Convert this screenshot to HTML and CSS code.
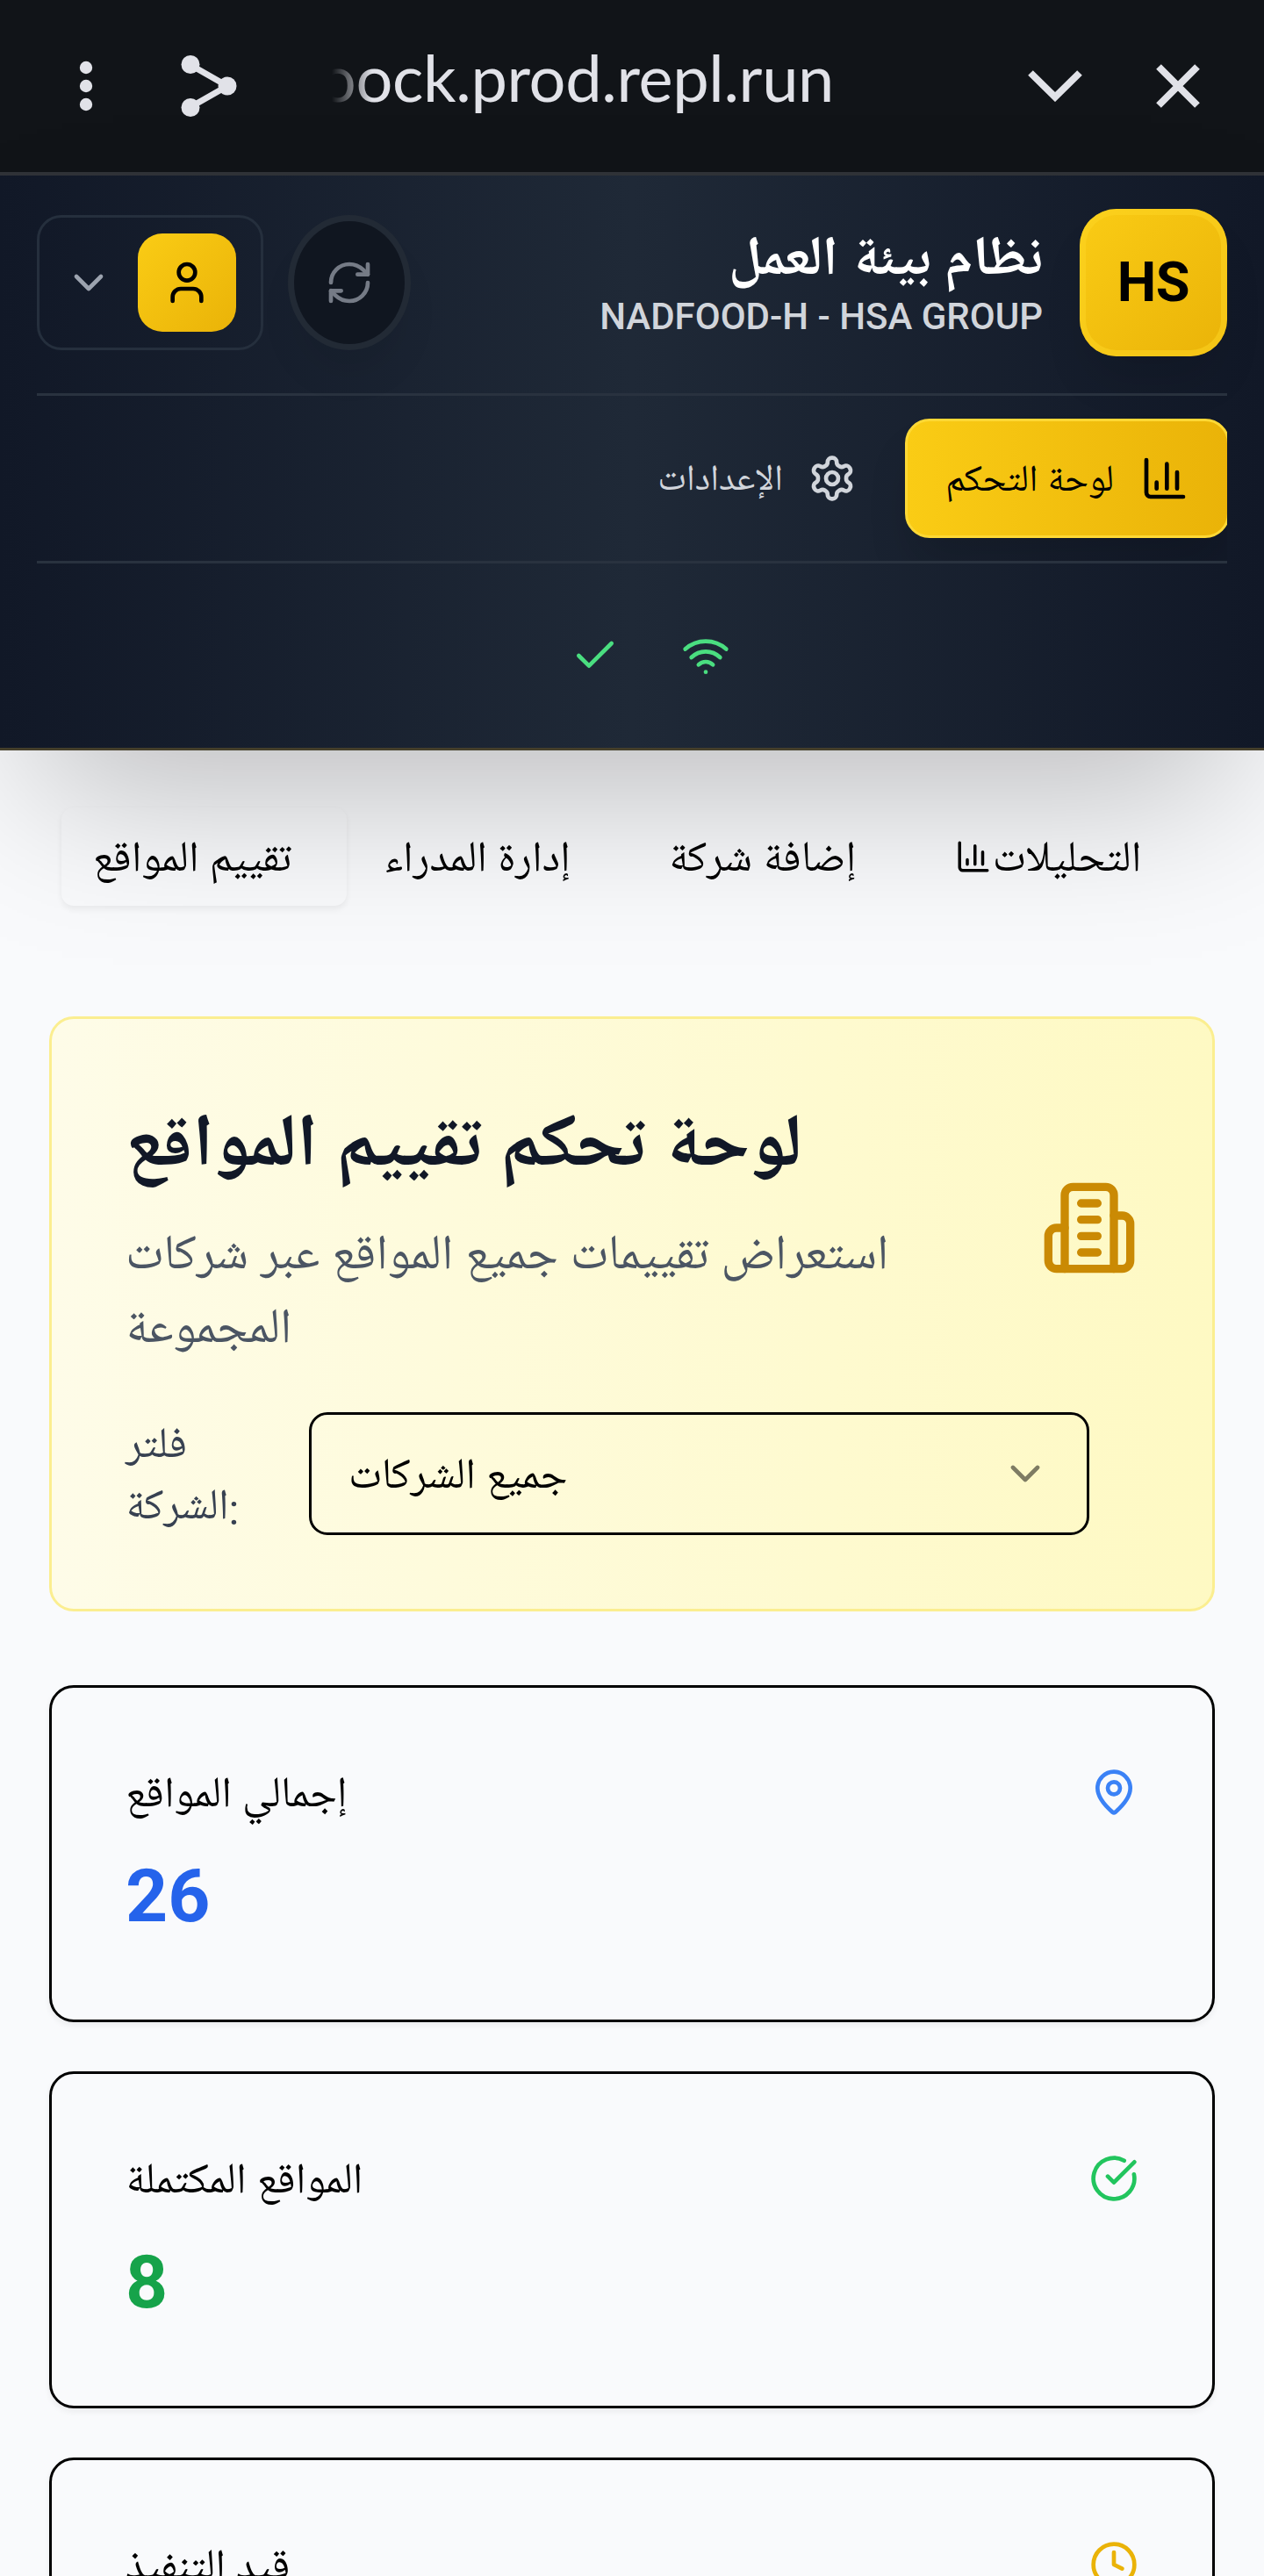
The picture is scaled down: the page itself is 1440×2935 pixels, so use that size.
FILE: index.html
```html
<!DOCTYPE html>
<html lang="ar">
<head>
<meta charset="utf-8">
<title>نظام بيئة العمل</title>
<link rel="stylesheet" href="styles.css">
</head>
<body>
<div class="browser-bar">
  <svg class="bar-dots" viewBox="0 0 20 60"><circle cx="10" cy="9" r="7.2"/><circle cx="10" cy="30" r="7.2"/><circle cx="10" cy="51" r="7.2"/></svg>
  <svg class="bar-share" viewBox="0 0 64 72"><path d="M11 12 53 36 11 60"/><circle cx="11" cy="11.500" r="10.500"/><circle cx="53" cy="36" r="10.500"/><circle cx="11" cy="60.500" r="10.500"/></svg>
  <div class="bar-url"><span>oock.prod.repl.run</span></div>
  <svg class="bar-chevron" viewBox="0 0 62 36"><path d="M3 3 31 30.500 59 3"/></svg>
  <svg class="bar-close" viewBox="0 0 50 50"><path d="M3 3 47 47M47 3 3 47"/></svg>
</div>

<header class="header">
  <div class="top-row">
    <div class="account">
      <svg class="icon chevron" viewBox="0 0 24 24"><path d="m6 9 6 6 6-6"/></svg>
      <span class="avatar"><svg class="icon" viewBox="0 0 24 24"><path d="M19 21v-2a4 4 0 0 0-4-4H9a4 4 0 0 0-4 4v2"/><circle cx="12" cy="7" r="4"/></svg></span>
    </div>
    <div class="refresh"><svg class="icon" viewBox="0 0 24 24"><path d="M3 12a9 9 0 0 1 9-9 9.750 9.750 0 0 1 6.740 2.740L21 8"/><path d="M21 3v5h-5"/><path d="M21 12a9 9 0 0 1-9 9 9.750 9.750 0 0 1-6.740-2.740L3 16"/><path d="M8 16H3v5"/></svg></div>
    <div class="brand">
      <h1 class="brand-title">نظام بيئة العمل</h1>
      <p class="brand-sub">NADFOOD-H - HSA GROUP</p>
    </div>
    <div class="logo">HS</div>
  </div>
  <nav class="nav">
    <a class="nav-item"><span>الإعدادات</span><svg class="icon" viewBox="0 0 24 24"><path d="M12.220 2h-.44a2 2 0 0 0-2 2v.18a2 2 0 0 1-1 1.730l-.43.25a2 2 0 0 1-2 0l-.15-.08a2 2 0 0 0-2.730.73l-.22.38a2 2 0 0 0 .73 2.730l.15.1a2 2 0 0 1 1 1.720v.51a2 2 0 0 1-1 1.740l-.15.09a2 2 0 0 0-.73 2.730l.22.38a2 2 0 0 0 2.730.73l.15-.08a2 2 0 0 1 2 0l.43.25a2 2 0 0 1 1 1.730V20a2 2 0 0 0 2 2h.44a2 2 0 0 0 2-2v-.18a2 2 0 0 1 1-1.730l.43-.25a2 2 0 0 1 2 0l.15.08a2 2 0 0 0 2.730-.73l.22-.39a2 2 0 0 0-.73-2.730l-.15-.08a2 2 0 0 1-1-1.740v-.5a2 2 0 0 1 1-1.740l.15-.09a2 2 0 0 0 .73-2.730l-.22-.38a2 2 0 0 0-2.730-.73l-.15.08a2 2 0 0 1-2 0l-.43-.25a2 2 0 0 1-1-1.730V4a2 2 0 0 0-2-2z"/><circle cx="12" cy="12" r="3"/></svg></a>
    <a class="nav-item active"><span>لوحة التحكم</span><svg class="icon" viewBox="0 0 24 24"><path d="M3 3v16a2 2 0 0 0 2 2h16"/><path d="M18 17V9M13 17V5M8 17v-3"/></svg></a>
  </nav>
  <div class="status">
    <svg class="icon" viewBox="0 0 24 24"><path d="M20 6 9 17l-5-5"/></svg>
    <svg class="icon" viewBox="0 0 24 24"><path d="M12 20h.01"/><path d="M2 8.820a15 15 0 0 1 20 0"/><path d="M5 12.859a10 10 0 0 1 14 0"/><path d="M8.500 16.429a5 5 0 0 1 7 0"/></svg>
  </div>
</header>

<main class="main">
  <div class="tabs">
    <div class="tab selected"><span>تقييم المواقع</span></div>
    <div class="tab"><span>إدارة المدراء</span></div>
    <div class="tab"><span>إضافة شركة</span></div>
    <div class="tab"><svg class="icon" viewBox="0 0 24 24"><path d="M3 3v16a2 2 0 0 0 2 2h16"/><path d="M18 17V9M13 17V5M8 17v-3"/></svg><span>التحليلات</span></div>
  </div>

  <section class="hero">
    <div class="hero-head">
      <div class="hero-text">
        <h2 class="hero-title">لوحة تحكم تقييم المواقع</h2>
        <p class="hero-sub">استعراض تقييمات جميع المواقع عبر شركات المجموعة</p>
      </div>
      <svg class="icon building" viewBox="0 0 24 24"><path d="M6 22V4a2 2 0 0 1 2-2h8a2 2 0 0 1 2 2v18Z"/><path d="M6 12H4a2 2 0 0 0-2 2v6a2 2 0 0 0 2 2h2"/><path d="M18 9h2a2 2 0 0 1 2 2v9a2 2 0 0 1-2 2h-2"/><path d="M10 6h4M10 10h4M10 14h4M10 18h4"/></svg>
    </div>
    <div class="filter">
      <label class="filter-label">فلتر الشركة:</label>
      <div class="select"><span>جميع الشركات</span><svg class="icon" viewBox="0 0 24 24"><path d="m6 9 6 6 6-6"/></svg></div>
    </div>
  </section>

  <section class="stats">
    <article class="card blue">
      <div class="card-head"><span>إجمالي المواقع</span><svg class="icon" viewBox="0 0 24 24"><path d="M20 10c0 4.993-5.539 10.193-7.399 11.799a1 1 0 0 1-1.202 0C9.539 20.193 4 14.993 4 10a8 8 0 0 1 16 0"/><circle cx="12" cy="10" r="3"/></svg></div>
      <div class="card-value">26</div>
    </article>
    <article class="card green">
      <div class="card-head"><span>المواقع المكتملة</span><svg class="icon" viewBox="0 0 24 24"><path d="M21.801 10A10 10 0 1 1 17 3.335"/><path d="m9 11 3 3L22 4"/></svg></div>
      <div class="card-value">8</div>
    </article>
    <article class="card yellow">
      <div class="card-head"><span>قيد التنفيذ</span><svg class="icon" viewBox="0 0 24 24"><circle cx="12" cy="12" r="10"/><path d="M12 6v6l4 2"/></svg></div>
    </article>
  </section>
</main>
</body>
</html>
```
FILE: styles.css
```css
* { box-sizing: border-box; margin: 0; padding: 0; }
html, body { height: 2935px; overflow: hidden; }
body {
  width: 1440px;
  background: #f9fafc;
  color: #000;
  font-family: Roboto, "Noto Naskh Arabic UI", "Noto Naskh Arabic", sans-serif;
  font-size: 49px;
  line-height: 70px;
}
.icon {
  width: 56px; height: 56px; flex: none;
  fill: none; stroke: currentColor; stroke-width: 2;
  stroke-linecap: round; stroke-linejoin: round;
}

/* browser bar */
.browser-bar {
  display: flex; align-items: center;
  height: 200px; padding: 0 73px 0 88px;
  background: #111418;
  border-bottom: 4px solid #303338;
  color: #e1e2e8;
}
.browser-bar svg { flex: none; fill: #e1e2e8; stroke: #e1e2e8; stroke-width: 0; }
.bar-dots { width: 20px; height: 60px; }
.browser-bar .bar-share { width: 64px; height: 72px; margin-left: 98px; }
.bar-share path { fill: none; stroke-width: 7; }
.bar-url {
  display: flex; justify-content: flex-end;
  width: 572px; margin: 0 auto 0 108px; padding-bottom: 21px; overflow: hidden;
  font: 400 74px/110px Lato, sans-serif;
  letter-spacing: -.35px;
  white-space: nowrap;
  -webkit-mask-image: linear-gradient(to right, transparent, #000 46px);
  mask-image: linear-gradient(to right, transparent, #000 46px);
}
.browser-bar .bar-chevron { width: 62px; height: 36px; fill: none; stroke-width: 8; margin-right: 84px; }
.browser-bar .bar-close { width: 50px; height: 50px; fill: none; stroke-width: 8; }

/* header */
.header {
  position: relative;
  height: 655px; padding: 0 42px;
  background: linear-gradient(to right, #111827, #1f2937 50%, #111827);
  border-bottom: 3px solid #453f2b;
  box-shadow: 0 88px 175px -42px rgba(0, 0, 0, .25);
}
.top-row { display: flex; align-items: center; height: 248px; padding: 38px 0 42px; }
.account {
  display: flex; align-items: center; justify-content: space-between;
  width: 258px; height: 154px; padding: 0 28px;
  border: 3px solid #252f3d; border-radius: 28px;
}
.chevron { color: #9ca3af; }
.avatar {
  display: grid; place-items: center;
  width: 112px; height: 112px; border-radius: 28px;
  background: linear-gradient(135deg, #facc15, #eab308);
}
.refresh {
  display: grid; place-items: center;
  width: 126px; height: 140px; margin-left: 35px; border-radius: 50%;
  background: #101620; color: #757b86;
  box-shadow: 0 0 0 7px #222a35, 0 35px 52px -10px rgba(0, 0, 0, .1);
}
.brand { margin-left: auto; margin-right: 42px; padding-top: 9px; text-align: right; color: #fff; }
.brand-title { margin-bottom: -3px; font-size: 63px; font-weight: 700; line-height: 72px; }
.brand-sub { font-size: 42px; font-weight: 500; line-height: 56px; color: #d1d5db; white-space: nowrap; }
.logo {
  display: grid; place-items: center;
  width: 168px; height: 168px; border-radius: 42px;
  background: linear-gradient(135deg, #facc15, #eab308);
  box-shadow: inset 0 0 0 7px rgba(253, 214, 36, .5), 0 35px 52px -10px rgba(0, 0, 0, .1);
  color: #000; font-size: 63px; font-weight: 700; letter-spacing: -.5px;
}
.nav {
  display: flex; justify-content: flex-end; align-items: center; gap: 14px;
  height: 194px; overflow: hidden;
  border-top: 3px solid #29323f; border-bottom: 3px solid #29323f;
}
.nav-item {
  display: flex; align-items: center; justify-content: flex-end; gap: 28px;
  height: 129px; padding: 0 41px 0 42px;
  font-size: 42px; color: #d1d5db; white-space: nowrap;
}
.nav-item span { padding-top: 9px; }
.nav-item.active {
  gap: 30px; width: 370px; height: 136px; margin-right: -3px; padding: 0 43px 0 0;
  border: 3px solid #fdd835; border-radius: 28px;
  background: linear-gradient(to right, #facc15, #eab308);
  box-shadow: 0 35px 52px -10px rgba(0, 0, 0, .15);
  color: #000; font-size: 42.700px;
}
.status {
  display: flex; justify-content: center; align-items: center; gap: 70px;
  height: 210px; padding-left: 42px; color: #4ade80;
}

/* page content */
.main { padding: 65px 56px 0; }
.tabs { display: grid; grid-template-columns: repeat(4, 1fr); height: 112px; margin: 0 14px 126px; }
.tab {
  display: flex; align-items: center; justify-content: center; gap: 1px;
  padding-right: 27px; border-radius: 14px; white-space: nowrap;
}
.tab span { padding-top: 14px; }
.tab.selected { background: #f9fafc; box-shadow: 0 3.500px 7px rgba(0, 0, 0, .06); }
.tab .icon { width: 42px; height: 42px; }

.hero {
  height: 678px; padding: 84px 84.500px 84px 84px;
  border: 3px solid #fbee90; border-radius: 28px;
  background: linear-gradient(to right, #fefce8, #fef9c3);
}
.hero-head { display: flex; align-items: center; justify-content: space-between; height: 308px; }
.hero-text { width: 890px; padding-top: 16px; }
.hero-title { margin-bottom: 25px; font-size: 84.600px; font-weight: 700; line-height: 112px; color: #111827; }
.hero-sub { font-size: 56px; line-height: 84px; color: #4b5563; }
.building { width: 112px; height: 112px; color: #ca8a04; }
.filter { display: flex; margin-top: 56px; }
.filter-label { width: 209px; padding: 7px 70px 0 0; color: #374151; }
.select {
  display: flex; align-items: center; justify-content: space-between;
  width: 889px; height: 140px; padding: 0 42px;
  border: 3px solid #000; border-radius: 21px;
}
.select span { padding-top: 14px; }
.select .icon { opacity: .5; }

.stats { display: grid; gap: 56px; margin-top: 84px; }
.card {
  height: 384px; padding: 84px 84.500px 84px 84px;
  border: 3px solid #000; border-radius: 28px;
  box-shadow: 0 3.500px 7px rgba(0, 0, 0, .06);
}
.card-head { display: flex; align-items: center; justify-content: space-between; height: 70px; margin-bottom: 28px; }
.card-head span { padding-top: 14px; }
.card-value { font-size: 84px; font-weight: 700; line-height: 112px; }
.blue .icon { color: #3b82f6; }
.blue .card-value { color: #2563eb; }
.green .icon { color: #22c55e; }
.green .card-value { color: #16a34a; }
.yellow .icon { color: #eab308; }
```
